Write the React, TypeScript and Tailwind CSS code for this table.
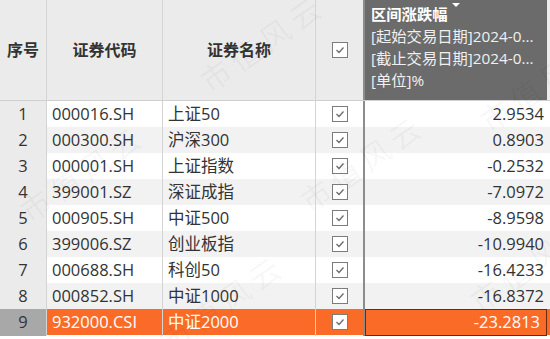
const rows = [
  { code: '000016.SH', name: '上证50', value: '2.9534' },
  { code: '000300.SH', name: '沪深300', value: '0.8903' },
  { code: '000001.SH', name: '上证指数', value: '-0.2532' },
  { code: '399001.SZ', name: '深证成指', value: '-7.0972' },
  { code: '000905.SH', name: '中证500', value: '-8.9598' },
  { code: '399006.SZ', name: '创业板指', value: '-10.9940' },
  { code: '000688.SH', name: '科创50', value: '-16.4233' },
  { code: '000852.SH', name: '中证1000', value: '-16.8372' },
  { code: '932000.CSI', name: '中证2000', value: '-23.2813' },
]

// faint diagonal watermark positions
const marks = [
  { left: 190, top: 20 },
  { left: 10, top: 150 },
  { left: 290, top: 140 },
  { left: 470, top: 60 },
  { left: 150, top: 280 },
  { left: 460, top: 240 },
]

function Box() {
  return (
    <div className="w-[16px] h-[16px] border border-[#7c7c7c] bg-white flex items-center justify-center">
      <svg width="10" height="8" viewBox="0 0 10 8" fill="none">
        <polyline points="1.5,4 4,6.5 8.5,1.5" stroke="#6a6a6a" strokeWidth="1.3" />
      </svg>
    </div>
  )
}

export default function App() {
  return (
    <div
      className="relative w-[550px] h-[339px] overflow-hidden bg-white text-[#333] text-[16.5px]"
      style={{ fontFamily: '"Open Sans", "Noto Sans CJK SC", sans-serif' }}
    >
      {/* header */}
      <div className="grid grid-cols-[47px_116px_153px_49px_1fr] h-[101px] bg-[#ebebeb] border-b border-[#d0d0d0] text-[16px]">
        <div className="flex items-center justify-center font-bold border-r border-[#d4d4d4]">序号</div>
        <div className="flex items-center justify-center font-bold border-r border-[#d4d4d4]">证券代码</div>
        <div className="flex items-center justify-center font-bold border-r border-[#d4d4d4]">证券名称</div>
        <div className="flex items-center justify-center border-r-2 border-[#8c8c8c]">
          <Box />
        </div>
        <div className="relative bg-[#6b6b6b] text-white mr-[3px] pl-[6px] pt-[3px] leading-[22px] text-[15.3px] overflow-hidden">
          <div className="absolute left-1/2 top-[3px] -translate-x-1/2 w-0 h-0 border-l-[4px] border-r-[4px] border-t-[4px] border-l-transparent border-r-transparent border-t-white" />
          <div className="font-bold">区间涨跌幅</div>
          <div className="text-[#f0f0f0] whitespace-nowrap">[起始交易日期]2024-0...</div>
          <div className="text-[#f0f0f0] whitespace-nowrap">[截止交易日期]2024-0...</div>
          <div className="text-[#f0f0f0]">[单位]%</div>
        </div>
      </div>

      {/* rows */}
      {rows.map((r, i) => {
        const selected = i === rows.length - 1
        const even = i % 2 === 1
        const bg = selected ? 'bg-[#fb6b28]' : even ? 'bg-[#f2f2f2]' : 'bg-white'
        const txt = selected ? 'text-white' : 'text-[#333]'
        return (
          <div key={r.code} className={`grid grid-cols-[47px_116px_153px_49px_1fr] h-[26px] ${bg} ${txt}`}>
            <div
              className={`flex items-center justify-center border-r border-[#d4d4d4] text-[#333] ${
                selected ? 'bg-[#a8a8a8]' : 'bg-[#ebebeb]'
              }`}
            >
              {i + 1}
            </div>
            <div className="flex items-center pl-[5px] border-r border-[#d4d4d4] whitespace-nowrap">{r.code}</div>
            <div className="flex items-center pl-[5px] border-r border-[#d4d4d4] whitespace-nowrap">{r.name}</div>
            <div className="flex items-center justify-center border-r-2 border-[#8c8c8c]">
              <Box />
            </div>
            <div
              className={`flex items-center justify-end pr-[6px] ${
                selected ? 'border border-[#6b2a0c] mr-[3px] pr-[3px]' : ''
              }`}
            >
              {r.value}
            </div>
          </div>
        )
      })}

      {/* watermark */}
      {marks.map((m, i) => (
        <div
          key={i}
          className="absolute pointer-events-none text-[30px] text-black/[0.045] whitespace-nowrap -rotate-[35deg] tracking-[6px]"
          style={{ left: m.left, top: m.top, fontFamily: '"Noto Sans CJK SC", serif' }}
        >
          市值风云
        </div>
      ))}
    </div>
  )
}
